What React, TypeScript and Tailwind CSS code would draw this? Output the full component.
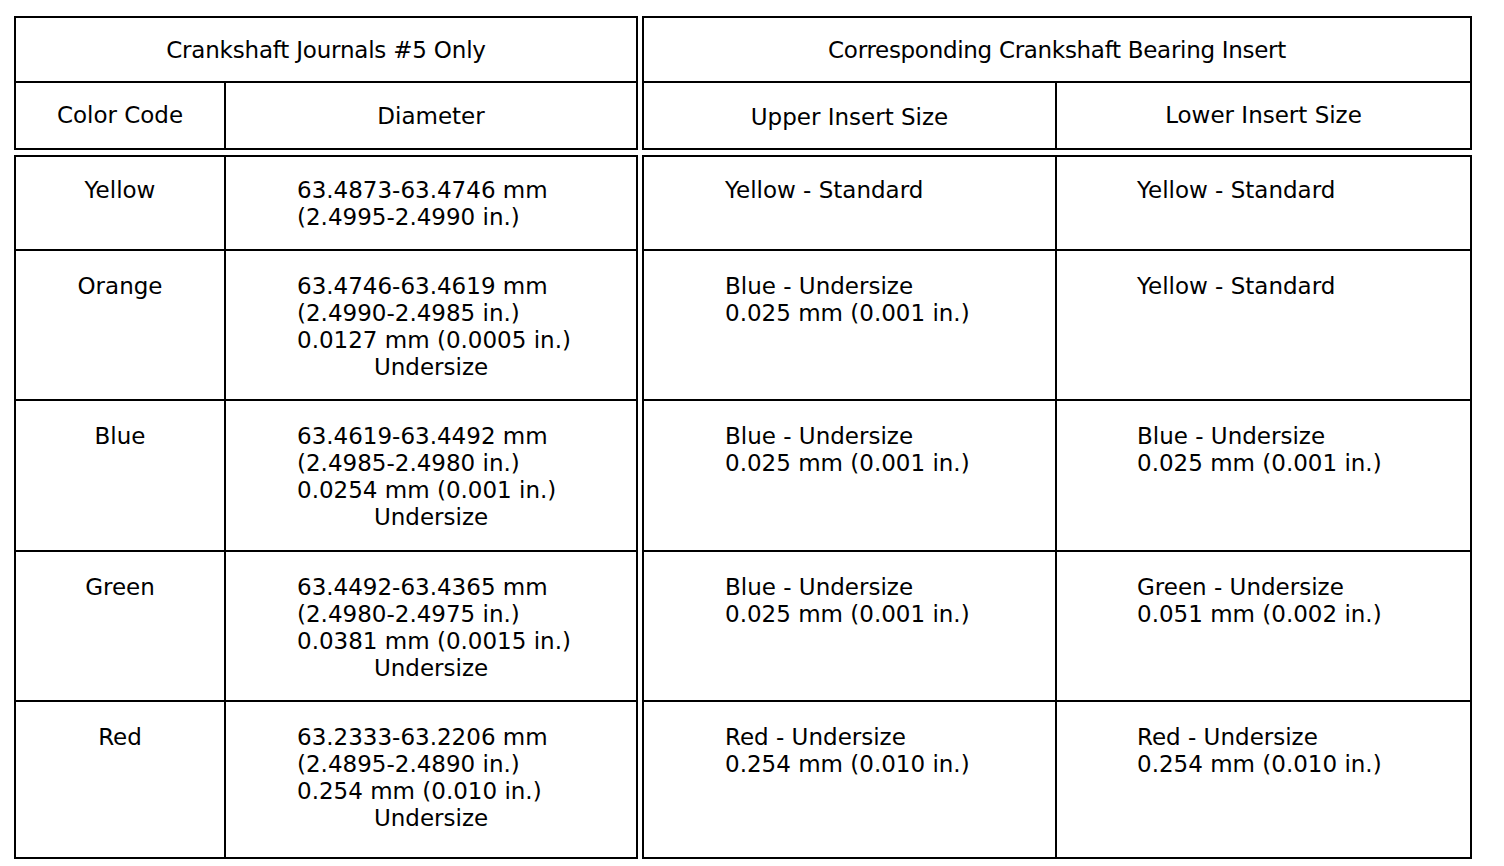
const rows = [
  {
    code: 'Yellow',
    diameter: ['63.4873-63.4746 mm', '(2.4995-2.4990 in.)'],
    undersize: false,
    upper: ['Yellow - Standard'],
    lower: ['Yellow - Standard'],
    h: 'h-[92px]',
  },
  {
    code: 'Orange',
    diameter: ['63.4746-63.4619 mm', '(2.4990-2.4985 in.)', '0.0127 mm (0.0005 in.)'],
    undersize: true,
    upper: ['Blue - Undersize', '0.025 mm (0.001 in.)'],
    lower: ['Yellow - Standard'],
    h: 'h-[150px]',
  },
  {
    code: 'Blue',
    diameter: ['63.4619-63.4492 mm', '(2.4985-2.4980 in.)', '0.0254 mm (0.001 in.)'],
    undersize: true,
    upper: ['Blue - Undersize', '0.025 mm (0.001 in.)'],
    lower: ['Blue - Undersize', '0.025 mm (0.001 in.)'],
    h: 'h-[151px]',
  },
  {
    code: 'Green',
    diameter: ['63.4492-63.4365 mm', '(2.4980-2.4975 in.)', '0.0381 mm (0.0015 in.)'],
    undersize: true,
    upper: ['Blue - Undersize', '0.025 mm (0.001 in.)'],
    lower: ['Green - Undersize', '0.051 mm (0.002 in.)'],
    h: 'h-[150px]',
  },
  {
    code: 'Red',
    diameter: ['63.2333-63.2206 mm', '(2.4895-2.4890 in.)', '0.254 mm (0.010 in.)'],
    undersize: true,
    upper: ['Red - Undersize', '0.254 mm (0.010 in.)'],
    lower: ['Red - Undersize', '0.254 mm (0.010 in.)'],
    h: 'h-[157px]',
  },
];

const App = () => {
  return (
    <div className="min-h-screen bg-white pl-[14px] pt-[16px] text-black text-[23px] leading-[27px] font-['DejaVu_Sans',Verdana,sans-serif]">
      <div className="grid grid-cols-[624px_830px] gap-x-[4px] gap-y-[5px]">
        {/* Journals header */}
        <div className="border-2 border-black h-[134px] flex flex-col">
          <div className="h-[63px] flex items-center justify-center pt-[2px] tracking-[-0.2px]">Crankshaft Journals #5 Only</div>
          <div className="border-t-2 border-black flex-1 flex">
            <div className="w-[208px] flex items-center justify-center">Color Code</div>
            <div className="flex-1 border-l-2 border-black flex items-center justify-center pt-[2px]">Diameter</div>
          </div>
        </div>

        {/* Bearing header */}
        <div className="border-2 border-black h-[134px] flex flex-col">
          <div className="h-[63px] flex items-center justify-center pt-[2px] tracking-[-0.3px]">Corresponding Crankshaft Bearing Insert</div>
          <div className="border-t-2 border-black flex-1 flex">
            <div className="w-[411px] flex items-center justify-center pt-[3px]">Upper Insert Size</div>
            <div className="flex-1 border-l-2 border-black flex items-center justify-center">Lower Insert Size</div>
          </div>
        </div>

        {/* Journals body */}
        <div className="border-2 border-black flex flex-col">
          {rows.map((r, i) => (
            <div key={r.code} className={`${r.h} flex ${i > 0 ? 'border-t-2 border-black' : ''}`}>
              <div className={`w-[208px] text-center ${i > 0 ? 'pt-[22px]' : 'pt-[20px]'}`}>{r.code}</div>
              <div className={`flex-1 border-l-2 border-black ${i > 0 ? 'pt-[22px]' : 'pt-[20px]'}`}>
                <div className="pl-[71px]">
                  {r.diameter.map((l) => (
                    <div key={l}>{l}</div>
                  ))}
                </div>
                {r.undersize && <div className="text-center">Undersize</div>}
              </div>
            </div>
          ))}
        </div>

        {/* Bearing body */}
        <div className="border-2 border-black flex flex-col">
          {rows.map((r, i) => (
            <div key={r.code} className={`${r.h} flex ${i > 0 ? 'border-t-2 border-black' : ''}`}>
              <div className={`w-[411px] pl-[81px] ${i > 0 ? 'pt-[22px]' : 'pt-[20px]'}`}>
                {r.upper.map((l) => (
                  <div key={l}>{l}</div>
                ))}
              </div>
              <div className={`flex-1 border-l-2 border-black pl-[80px] ${i > 0 ? 'pt-[22px]' : 'pt-[20px]'}`}>
                {r.lower.map((l) => (
                  <div key={l}>{l}</div>
                ))}
              </div>
            </div>
          ))}
        </div>
      </div>
    </div>
  );
};

export default App;
